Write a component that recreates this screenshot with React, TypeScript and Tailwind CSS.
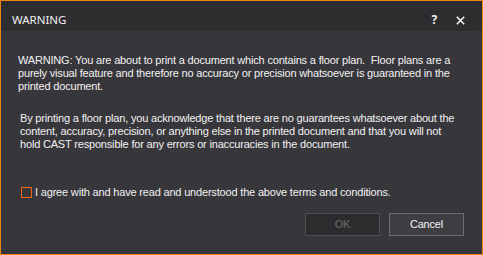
export default function App() {
  return (
    <div className="flex h-[255px] w-[483px] flex-col border border-[#f0820f] bg-[#37363b] font-['Liberation_Sans',Arial,sans-serif] text-[11px] tracking-[-0.18px] text-[#f2f2f2]">
      <header className="flex h-[30px] shrink-0 items-center justify-between bg-[#2d2d30] pl-[11px] pr-[17px] pt-[8px]">
        <span className="font-['Noto_Sans',sans-serif] text-[11.5px] tracking-normal text-[#f0f0f0]">WARNING</span>
        <div className="flex items-center gap-[19px]">
          <span className="font-['Noto_Sans',sans-serif] text-[12px] font-bold">?</span>
          <svg width="9" height="9" viewBox="0 0 9 9" aria-hidden="true">
            <path d="M0.8 0.8 L8.2 8.2 M8.2 0.8 L0.8 8.2" stroke="#f4f4f4" strokeWidth="1.6" />
          </svg>
        </div>
      </header>
      <main className="flex min-h-0 flex-1 flex-col px-[16px] pt-[23px]">
        <p className="whitespace-nowrap pl-[1px] leading-[13px]">
          WARNING: You are about to print a document which contains a floor plan.&nbsp; Floor plans are a
          <br />
          purely visual feature and therefore no accuracy or precision whatsoever is guaranteed in the
          <br />
          printed document.
        </p>
        <p className="mt-[19px] whitespace-nowrap pl-[3px] leading-[13px]">
          By printing a floor plan, you acknowledge that there are no guarantees whatsoever about the
          <br />
          content, accuracy, precision, or anything else in the printed document and that you will not
          <br />
          hold CAST responsible for any errors or inaccuracies in the document.
        </p>
        <div className="mt-[35px] flex items-center gap-[3px] pl-[4px] leading-[13px]">
          <div className="flex h-[11px] w-[11px] shrink-0 bg-[#f7650c] p-[1px]">
            <div className="flex-1 bg-[#37363b]" />
          </div>
          <span className="whitespace-nowrap">I agree with and have read and understood the above terms and conditions.</span>
        </div>
        <div className="mt-[14px] flex justify-end gap-[9px] pr-[2px]">
          <button className="h-[23px] w-[75px] border border-[#4f4f52] bg-[#2c2c2e] text-[11px] text-[#6a6a6c]">OK</button>
          <button className="h-[23px] w-[75px] border border-[#6e6e72] bg-[#3e3e42] text-[11px] text-[#f2f2f2]">Cancel</button>
        </div>
      </main>
    </div>
  );
}
